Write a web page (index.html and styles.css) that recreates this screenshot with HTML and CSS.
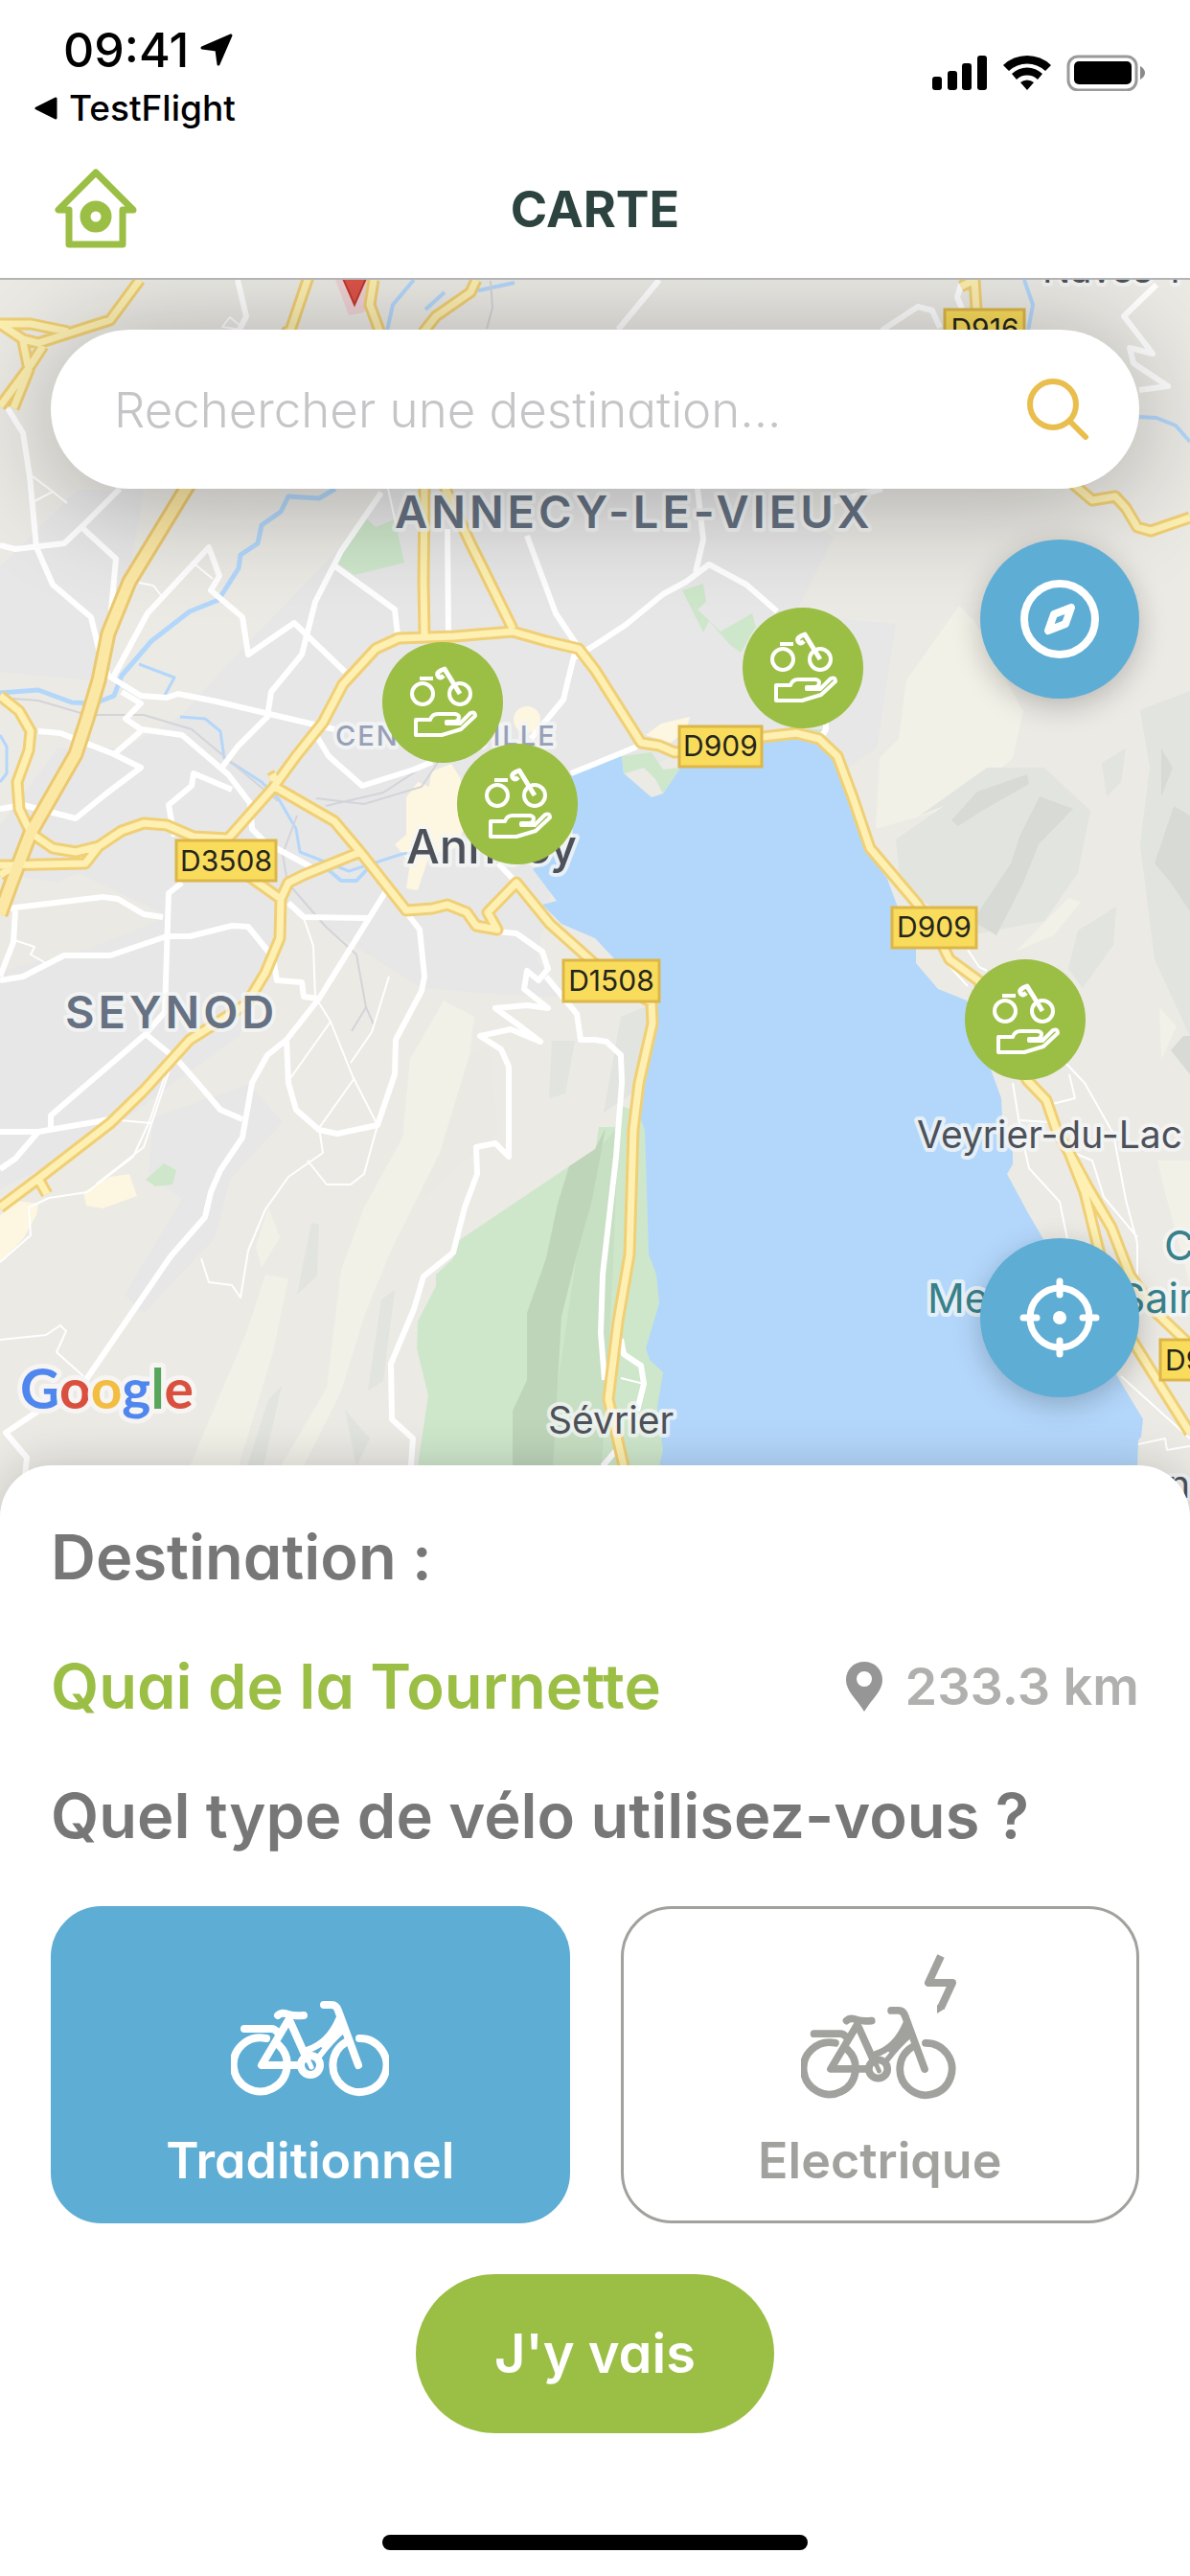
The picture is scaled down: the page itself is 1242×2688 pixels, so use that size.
FILE: index.html
```html
<!DOCTYPE html>
<html lang="fr">
<head>
  <meta charset="UTF-8" />
  <meta name="viewport" content="width=device-width, initial-scale=1.0" />
  <title>Carte</title>
  <link rel="stylesheet" href="styles.css">
</head>
<body>
  <header class="header">
    <div class="status-bar">
      <div class="status-left">
        <div class="clock">
          <span>09:41</span>
          <svg width="34" height="34" viewBox="0 0 34 34" aria-hidden="true"><path d="M32 2 L19 32 L17 17 L2 15 Z" fill="#000" stroke="#000" stroke-width="3" stroke-linejoin="round"/></svg>
        </div>
        <a class="back-app" href="#">
          <svg width="24" height="24" viewBox="0 0 24 24" aria-hidden="true"><path d="M2 12 L22 2 V22 Z" fill="#000" stroke="#000" stroke-width="3" stroke-linejoin="round"/></svg>
          TestFlight
        </a>
      </div>
      <svg class="status-icons" width="222" height="38" viewBox="0 0 222 38" aria-hidden="true">
        <rect x="0" y="23" width="10" height="14" rx="3"/>
        <rect x="16" y="17" width="10" height="20" rx="3"/>
        <rect x="31" y="9" width="10" height="28" rx="3"/>
        <rect x="47" y="1" width="10" height="36" rx="3"/>
        <path d="M74 11 A36 36 0 0 1 124 11 L118 17 A28 28 0 0 0 80 17 Z M83 20 A23 23 0 0 1 115 20 L110 26 A16 16 0 0 0 88 26 Z M92 29 A11 11 0 0 1 106 29 L99 37 Z"/>
        <rect x="142" y="2" width="71" height="35" rx="10" fill="none" stroke="#9a9a9a" stroke-width="3"/>
        <rect x="148" y="7" width="60" height="24" rx="5"/>
        <path d="M217 12 Q222 15 222 19 Q222 23 217 26 Z" fill="#8a8a8a"/>
      </svg>
    </div>
    <nav class="nav-bar">
      <a class="home-link" href="#" aria-label="Accueil">
        <svg width="86" height="84" viewBox="0 0 86 84" fill="none" stroke="#9bbe45">
          <path d="M43 4 L4 43 H15 V79 H71 V43 H82 Z" stroke-width="7" stroke-linejoin="round"/>
          <circle cx="43" cy="50" r="11" stroke-width="11"/>
        </svg>
      </a>
      <h1>CARTE</h1>
    </nav>
  </header>

  <main class="map">
    <svg class="map-canvas" viewBox="0 291 1242 1291" preserveAspectRatio="xMidYMin slice">
      <defs>
        <path id="roads" d="M146 291 L115 333 71 347 40 357 24 353 0 337 M0 337 L32 337 71 345 M45 360 L32 380 0 423 M24 355 L30 385 14 425
          M0 725 L20 741 32 762 30 782 18 815 20 843 32 868 55 884 79 888 103 882 127 866 150 858 174 860 202 872 238 874
          M0 902 L89 900 103 882 M0 912 L24 898
          M238 874 L285 821 309 788 337 753 358 713 392 676 416 665 475 663 535 658 570 668 604 676 621 698 669 774 688 777 704 784 760 778 796 768 831 764 855 770 874 788 890 831 908 884 958 943 985 988 991 1000 1021 1022 1072 1126 1092 1147 1104 1182 1116 1202 1136 1239 1160 1280 1179 1329 1207 1369 1250 1410
          M1116 1202 L1132 1243 1146 1300 1165 1370 1187 1406 1215 1451 1242 1494
          M303 344 L323 285 M390 291 L386 317 396 344 443 509 442 606 443 661 M497 291 L491 304 455 329 443 344 465 509 491 566 503 590 535 655
          M285 819 L349 856 376 888 424 949 451 947 467 943 487 951 497 965 519 969 509 951 539 920 574 963 640 1022 680 1045 681 1067 667 1129 661 1178 657 1308 645 1378 635 1459 651 1529 660 1582
          M376 888 L317 912 301 920 293 937 M248 905 L293 937 292 978 277 1014 257 1047 198 1084 150 1137 115 1171 40 1229 0 1259 M40 1229 L49 1245
          M1090 480 L1126 509 1140 521 1164 517 1175 529 1187 549 1201 553 1242 539 M1003 298 L1017 291 1019 321 M282 812 L289 808"/>
        <path id="highway" d="M303 344 L194 509 135 606 113 660 103 709 91 749 79 786 32 868 12 920 0 953"/>
        <g id="bike-pin">
          <circle r="63" fill="#9bbe45"/>
          <g fill="none" stroke="#fff" stroke-width="4" stroke-linejoin="round">
            <circle cx="-21" cy="-9" r="11"/>
            <circle cx="18" cy="-9" r="11"/>
            <path d="M-24 -25 H-10" stroke-width="4"/>
            <path d="M18 -9 L2 -35 Q-7 -32 -5 -28 T1 -28" stroke-width="5"/>
            <path d="M-28 34 V18 H-13 Q-11 12 -5 12 H13 Q17 13 17 15 Q17 20 12 20 H4 V22 H18 L29 11 Q34 9 34 14 L19 28 L-1 34 Z"/>
          </g>
        </g>
      </defs>

      <!-- relief et zones urbaines -->
      <rect y="291" width="1242" height="1291" fill="#ebeae5"/>
      <g fill="#e7e7e7">
        <path d="M0 590 L80 510 L150 510 L135 600 L100 710 L0 700 Z"/>
        <path d="M350 575 L400 509 H800 L870 560 L830 640 L935 650 L915 780 L885 800 L700 790 L596 830 L560 1000 L590 1040 L500 1035 L440 1030 L360 980 L300 940 L250 1080 L180 1130 L100 1190 L0 1240 V960 L60 990 L175 955 L60 900 L130 780 L190 745 L230 700 Z"/>
        <path d="M160 1165 L260 1130 L295 1170 L240 1230 L225 1290 L150 1370 L130 1350 L190 1250 L155 1225 Z"/>
        <path d="M60 780 L130 780 L250 900 L160 870 L60 920 L0 910 V860 Z"/>
      </g>
      <path d="M0 940 L107 935 L165 960 L90 990 L0 1012 Z M440 1130 L510 1090 L520 1180 L440 1250 Z" fill="#eae9e3"/>
      <g fill="#f1f1e8">
        <path d="M463 1043 L495 1060 L490 1100 L459 1202 L408 1304 L380 1373 L356 1451 L317 1529 H293 L341 1447 L356 1324 L380 1259 L420 1186 L428 1104 Z"/>
        <path d="M277 1329 L301 1333 L285 1410 L249 1529 H198 L226 1463 L257 1390 Z M280 1258 L292 1290 L273 1322 L267 1300 Z"/>
        <path d="M1017 647 L1045 700 L1068 741 L1057 790 L1001 839 L914 864 L918 790 L938 770 L946 709 L1001 631 Z"/>
        <path d="M1115 936 L1128 940 L1100 975 L1060 992 Z M1208 1210 H1242 V1340 L1215 1240 Z M1210 1050 L1228 1070 L1212 1105 Z"/>
      </g>
      <g fill="#e2e4df">
        <path d="M960 850 L1030 800 L1090 800 L1138 845 L1125 910 L1090 960 L1010 975 L940 920 L935 875 L985 840 Z"/>
        <path d="M1190 740 L1242 720 V1080 L1205 1000 L1190 880 L1200 800 Z M1150 795 L1175 780 L1170 815 L1155 830 Z"/>
        <path d="M1125 970 L1165 945 L1162 985 L1130 1030 L1115 1010 Z M398 1355 L412 1345 L400 1440 L384 1450 Z M325 1275 L333 1277 L331 1330 L310 1350 Z"/>
        <path d="M576 1085 H600 L590 1140 L573 1145 Z M648 1060 L684 1045 L660 1140 L630 1160 Z M280 1460 L294 1445 L275 1529 H258 Z M360 1470 L386 1500 L372 1529 Z"/>
      </g>
      <g fill="#d8dad5">
        <path d="M993 855 L1020 825 L1072 807 L1074 817 L1025 845 L1000 861 Z"/>
        <path d="M1064 872 L1085 830 L1120 843 L1084 880 L1068 920 L1040 975 L1015 960 L1055 900 Z"/>
        <path d="M1205 900 L1225 840 L1242 850 V950 L1222 920 Z M1222 1095 L1235 1080 H1242 V1120 Z M1212 780 L1224 800 L1212 830 Z"/>
      </g>
      <path d="M475 1296 L594 1216 L621 1202 L625 1175 H642 L649 1153 L680 1165 L700 1582 H428 L447 1455 L435 1406 L436 1378 L455 1341 V1329 L473 1312 Z" fill="#cee7cb"/>
      <path d="M621 1202 L645 1175 L640 1320 L628 1529 H574 L582 1443 L602 1308 Z" fill="#c7dfc3"/>
      <path d="M594 1216 L621 1198 L632 1176 L618 1251 L602 1308 L586 1373 L582 1443 L574 1582 H535 V1471 L550 1439 V1369 L570 1312 L582 1255 Z" fill="#bed5ba"/>
      <g fill="#cee7cb">
        <path d="M380 538 L392 549 L412 541 L422 586 L370 599 L351 586 Z"/>
        <path d="M712 615 L734 608 L737 627 L728 635 L752 658 L785 639 L789 653 L773 680 L762 672 L740 647 L734 659 Z"/>
        <path d="M152 1230 L171 1213 L184 1220 L180 1235 L162 1237 Z M840 760 H860 V768 H848 Z"/>
      </g>
      <g fill="#fdf6e0">
        <path d="M424 831 L436 815 L448 820 L450 804 L471 796 L480 810 L490 851 L475 884 L448 892 L436 928 L424 926 L428 900 L412 880 L424 870 Z"/>
        <circle cx="550" cy="750" r="14"/>
        <path d="M87 1243 L115 1227 L135 1224 L143 1247 L107 1260 L90 1257 Z M0 1267 L18 1252 L40 1255 L38 1267 L24 1292 L0 1316 Z M674 766 L690 754 L720 747 L716 762 L700 774 Z"/>
      </g>
      <path d="M350 291 H388 L380 325 L364 328 Z" fill="#efd3d5"/>

      <!-- lac et cours d'eau -->
      <path d="M596 808 L621 797 L649 788 L651 806 L680 831 L692 827 L710 800 L796 770 L831 766 L855 772 L870 790 L886 831 L904 886 L926 916 L936 943 L956 988 V1004 L979 1031 L1009 1043 L1033 1112 L1045 1145 L1046 1165 L1057 1202 V1214 L1051 1224 L1072 1263 L1090 1294 L1166 1435 L1193 1480 L1191 1498 L1188 1502 L1185 1582 H700 L688 1529 L692 1512 L686 1467 L692 1431 L678 1418 L674 1406 L688 1359 L685 1329 L677 1308 L674 1210 L673 1178 L668 1165 V1133 L686 1067 L684 1045 L621 978 L586 963 L566 943 L581 939 L556 906 L598 880 Z" fill="#b3d7fb"/>
      <path d="M649 788 L680 784 L692 802 L710 800 L692 827 L684 812 L672 800 L651 806 Z" fill="#cee7cb"/>
      <g fill="none" stroke="#b3d7fb" stroke-width="5" stroke-linejoin="round">
        <path d="M350 509 L333 519 L301 517 L293 533 L273 547 L269 566 L251 578 L249 592 L228 625 L198 637 L158 668 L127 704 L119 725 L99 733 L75 732 L40 719 L0 722"/>
        <path d="M188 747 L214 749 L230 762 L234 790 L273 815 L291 833 L309 864 L313 888 L364 908 L420 890 L440 888 M145 692 L182 706 L170 728 M0 766 L7 778 V806 L0 815" stroke-width="3"/>
        <path d="M432 291 L410 317 L404 344 M537 294 L500 302 L490 296 M444 322 L464 304 M1069 291 L1078 317 L1073 344 M1189 434 L1207 435 L1227 443 L1242 460 M343 907 L356 918 L372 918 L386 903" stroke-width="4"/>
      </g>

      <g fill="none" stroke="#d3d4da" stroke-width="2">
        <path d="M0 727 L40 730 L91 745 H150 L200 760 L290 835 M330 832 L380 838 L440 820 L460 790 M340 840 L400 826 L440 800 M310 850 L295 890 L300 920 L340 966 L372 995 L382 1050 L367 1075 M382 1050 L390 1068 M512 292 L514 320 L508 342"/>
      </g>

      <!-- petites rues -->
      <g fill="none" stroke="#fff" stroke-width="2" stroke-linejoin="round">
        <path d="M317 957 L327 986 L329 1039 L345 1065 L368 1122 L394 1173 L380 1224 L366 1235 H341 L321 1210 M406 1018 L388 1076 L366 1108 M345 1065 L301 1127 M370 1124 L333 1176 L337 1202 L301 1227 L277 1261 L259 1304 L251 1353 L242 1340 L218 1337 L210 1312"/>
        <path d="M174 1116 L156 1169 L139 1206 L91 1243 L51 1249 L30 1259 L32 1288 L0 1316 M0 1397 L48 1392 L63 1382 L69 1388 L59 1410 L87 1435 M178 1112 L150 1196 L100 1235 M12 979 L36 987 L32 995 L48 1004 M115 1167 L158 1171"/>
        <path d="M1057 1129 L1065 1178 L1074 1218 L1106 1253 L1114 1292 M1112 1108 L1132 1129 L1162 1182 L1175 1251 L1187 1296 V1340 M1010 990 L1022 1008 L1030 1012 M989 1005 L1010 1028 M1116 1120 L1122 1145 L1098 1151 M1065 1168 L1095 1170 M1116 1200 L1140 1210 L1152 1248 L1187 1290 M1170 1435 L1242 1500 M1188 1506 L1216 1500 L1218 1512 L1242 1508"/>
        <path d="M34 496 L55 512 L36 522 M55 512 L70 524 M200 585 L222 603 M145 607 L160 610 L168 620 M250 343 L232 340 L240 330 L252 340 M648 1437 L672 1443 M405 509 L413 545"/>
      </g>
      <g fill="none" stroke="#fff" stroke-width="6" stroke-linejoin="round">
        <path d="M248 291 L257 329 L250 343 M0 568 L16 572 L67 566 L85 549 L125 509 M85 549 L121 582 L115 647 M119 704 L154 639 L218 570 L229 600 L220 615 L253 643 L259 682 L307 649 L360 700"/>
        <path d="M8 425 L24 451 L31 496 L38 570 L55 609 L95 643 L104 680 L113 704 L147 725 L174 727 L186 723 L226 731 L349 760"/>
        <path d="M398 513 L356 574 L329 627 L315 682 L283 721 L279 747 L248 778 L230 802 M350 590 L412 635 L415 662 M467 551 L468 664 L485 660 M550 558 L580 639 L602 672 L594 704 L588 729 L554 770 M600 685 L621 672 L653 651 L692 619 L716 606 L740 588 L779 609 L811 637 M728 509 L734 562 L726 596"/>
        <path d="M127 721 L147 733 L131 749 L147 760 L190 766 L238 807 L261 837 L263 864 L277 878 L325 904 M147 762 L119 786 M40 762 L63 764 L119 786 L147 800 L111 827 L79 853 L24 839 L0 843 M182 872 L176 839 L200 819 L202 806 L242 823 M331 768 L343 788 L378 819 L432 802 L451 794 M596 806 L621 796 L665 778"/>
        <path d="M688 291 L645 343 M920 344 L958 319 L973 323 L981 341 M1207 296 L1173 329 L1203 368 L1179 362 L1183 378 L1219 402 L1189 406 M1003 296 L999 309 L1004 321 M855 772 L862 760 V745 M860 525 L921 509"/>
        <path d="M0 1022 L24 1018 L67 996 H115 L174 976 H198 L242 965 L259 966 L285 998 L289 1022 L315 1024 L317 1039 L333 1041 M190 920 L176 931 L172 1055 L152 1078 L53 1163 V1175 M0 1180 H40 L115 1167 M40 1180 L16 1208 L0 1219 M152 1078 L186 1106 L208 1131 L230 1157 L253 1167"/>
        <path d="M404 927 L333 1041 L299 1084 L279 1100 L263 1129 L253 1186 L230 1220 L220 1243 L214 1269 L178 1310 L91 1437 L6 1494 L28 1520 L24 1560 M299 1084 L301 1129 L309 1157 L333 1178 L352 1182 L394 1173 L412 1120 L413 1084 L440 1033 L443 1018 L438 969 L424 951 M301 941 L317 956 L384 957"/>
        <path d="M8 947 L107 935 L123 937 L150 953 L170 956 M16 949 L14 982 L0 1018 M519 971 L539 973 L566 992 L572 1010 L562 1022 L550 1012 L547 1031 L572 1051 L550 1048 L517 1051 L539 1067 L564 1086 L533 1073 L501 1080 L523 1094 L531 1112 V1206 L517 1192 L497 1196 L498 1224 L485 1259 L473 1306 L442 1331 L432 1365 L408 1422 L409 1480 L431 1500 L428 1540 M539 920 L520 900"/>
        <path d="M570 1018 L602 1057 L606 1084 H621 L633 1086 L648 1100 L649 1129 L643 1206 L629 1329 L627 1390 L631 1439 M648 1396 L651 1412 L669 1424 L672 1443 L665 1471 M645 1510 L629 1529"/>
      </g>

      <!-- routes principales -->
      <g fill="none" stroke-linejoin="round">
        <use href="#roads" stroke="#f0cf75" stroke-width="13"/>
        <use href="#highway" stroke="#ebc971" stroke-width="17"/>
        <use href="#roads" stroke="#fdf0b2" stroke-width="7"/>
        <use href="#highway" stroke="#fce8a5" stroke-width="11"/>
      </g>
      <path d="M356 285 L370 317 L384 285 Z" fill="#dd5449" stroke="#c0392f" stroke-width="2"/>

      <g class="place">
        <text class="town" x="412" y="550">ANNECY-LE-VIEUX</text>
        <text class="town" x="68" y="1072">SEYNOD</text>
        <text class="district" x="350" y="777">CENTRE-VILLE</text>
        <text class="city" x="424" y="900">Annecy</text>
        <text x="1088" y="294">Naves-P</text>
        <text x="572" y="1495">Sévrier</text>
        <text x="957" y="1197">Veyrier-du-Lac</text>
        <text class="sight" x="1215" y="1314">Château</text>
        <text class="sight" x="968" y="1369">Menthon-Saint</text>
        <text x="1242" y="1562" text-anchor="end">Menthon</text>
      </g>

      <g class="shield">
        <rect x="184" y="876" width="104" height="42"/><text x="236" y="908">D3508</text>
        <rect x="709" y="757" width="86" height="42"/><text x="752" y="788">D909</text>
        <rect x="931" y="946" width="88" height="42"/><text x="975" y="977">D909</text>
        <rect x="588" y="1001" width="100" height="43"/><text x="638" y="1033">D1508</text>
        <rect x="986" y="322" width="83" height="42"/><text x="1028" y="353">D916</text>
        <rect x="1211" y="1397" width="88" height="42"/><text x="1255" y="1429">D909</text>
      </g>

      <text class="google" x="21" y="1469"><tspan fill="#5087ee">G</tspan><tspan fill="#d9503f">o</tspan><tspan fill="#f3bd42">o</tspan><tspan fill="#5087ee">g</tspan><tspan fill="#58a55c">l</tspan><tspan fill="#d9503f">e</tspan></text>

      <a href="#" aria-label="Station Centre-Ville"><use href="#bike-pin" x="462" y="732"/></a>
      <a href="#" aria-label="Station Annecy"><use href="#bike-pin" x="540" y="838"/></a>
      <a href="#" aria-label="Station Albigny"><use href="#bike-pin" x="838" y="696"/></a>
      <a href="#" aria-label="Station Veyrier"><use href="#bike-pin" x="1070" y="1063"/></a>
    </svg>

    <div class="map-controls">
      <form class="search">
        <input type="search" aria-label="Rechercher une destination" placeholder="Rechercher une destination...">
        <button type="submit" aria-label="Rechercher">
          <svg width="66" height="66" viewBox="0 0 66 66" fill="none" stroke="#e9be4d" stroke-width="6" stroke-linecap="round">
            <circle cx="28" cy="28" r="24"/>
            <path d="M46 46 L62 62"/>
          </svg>
        </button>
      </form>
      <button class="round-button" type="button" aria-label="Boussole">
        <svg width="84" height="84" viewBox="0 0 84 84" fill="none" stroke="#fff" stroke-width="8" stroke-linejoin="round">
          <circle cx="42" cy="42" r="37"/>
          <path d="M54 30 L48 47 L30 54 L36 37 Z"/>
        </svg>
      </button>
      <button class="round-button locate" type="button" aria-label="Me localiser">
        <svg width="84" height="84" viewBox="0 0 84 84" fill="none" stroke="#fff" stroke-width="7" stroke-linecap="round">
          <circle cx="42" cy="42" r="31"/>
          <path d="M42 4 V18 M42 66 V80 M4 42 H18 M66 42 H80"/>
          <circle cx="42" cy="42" r="7" fill="#fff" stroke="none"/>
        </svg>
      </button>
    </div>
  </main>

  <section class="panel">
    <h2>Destination :</h2>
    <div class="destination">
      <span class="destination-name">Quai de la Tournette</span>
      <span class="distance">
        <svg width="38" height="52" viewBox="0 0 38 52" aria-hidden="true"><path fill="#969696" fill-rule="evenodd" d="M19 0 C8 0 0 8 0 19 C0 31 12 40 19 52 C26 40 38 31 38 19 C38 8 30 0 19 0 Z M19 10 A8 8 0 1 1 19 26 A8 8 0 1 1 19 10 Z"/></svg>
        233.3 km
      </span>
    </div>
    <h2 id="bike-question">Quel type de vélo utilisez-vous ?</h2>

    <div class="bike-types" role="radiogroup" aria-labelledby="bike-question">
      <label class="bike-card">
        <input type="radio" name="bike" value="traditionnel" checked>
        <svg width="165" height="155" viewBox="0 -51 165 155" fill="none" stroke="currentColor" stroke-width="8" stroke-linecap="round" stroke-linejoin="round" aria-hidden="true">
          <g id="bike">
            <path d="M37 39 A28 28 0 1 0 50 46"/>
            <path d="M120 43 A28 28 0 1 0 134 39"/>
            <path d="M14 29 H42 Q46 29 49 33"/>
            <path d="M49 15 Q53 11 60 14 Q66 16 76 15"/>
            <path d="M60 20 L32 67 H72 M62 22 L79 60"/>
            <path d="M97 4 H105 Q110 4 112 10 L133 67"/>
            <path d="M113 18 Q102 44 80 51" stroke-width="7"/>
            <path d="M118 30 Q106 40 92 58 M116 26 L96 46" stroke-width="6"/>
            <circle cx="83" cy="67" r="10"/>
            <path d="M79 58 L84 69" stroke-width="5"/>
          </g>
        </svg>
        <span>Traditionnel</span>
      </label>
      <label class="bike-card">
        <input type="radio" name="bike" value="electrique">
        <svg width="165" height="155" viewBox="0 -51 165 155" fill="none" stroke="currentColor" stroke-width="8" stroke-linecap="round" stroke-linejoin="round" aria-hidden="true">
          <use href="#bike" transform="translate(0 6) scale(.97)"/>
          <path d="M146 -47 L133 -19 H158 L146 7" stroke-linecap="butt"/>
          <path d="M142 4 L150 8 L142 13 Z" fill="currentColor" stroke="none"/>
        </svg>
        <span>Electrique</span>
      </label>
    </div>

    <button class="go-button" type="button">J'y vais</button>
    <div class="home-indicator"></div>
  </section>
</body>
</html>
```
FILE: styles.css
```css
* {
  box-sizing: border-box;
}

body {
  margin: 0;
  min-height: 100vh;
  display: flex;
  flex-direction: column;
  font-family: Inter, "Liberation Sans", sans-serif;
  font-feature-settings: "cv11";
  background: #fff;
}

button, input {
  font: inherit;
  font-feature-settings: inherit;
  border: none;
}

button {
  cursor: pointer;
}

svg {
  display: block;
}

a {
  color: inherit;
  text-decoration: none;
}

/* header */
.header {
  border-bottom: 2px solid #b4b4b4;
}

.status-bar {
  display: flex;
  justify-content: space-between;
  align-items: flex-start;
  height: 146px;
  padding: 22px 47px 0 36px;
}

.status-left {
  font-feature-settings: normal;
}

.clock {
  display: flex;
  align-items: center;
  gap: 12px;
  padding-left: 30px;
  font-size: 50px;
  font-weight: 500;
  line-height: 60px;
}

.back-app {
  display: flex;
  align-items: center;
  gap: 12px;
  font-size: 37px;
  font-weight: 500;
  line-height: 62px;
}

.status-icons {
  margin-top: 35px;
}

.nav-bar {
  display: grid;
  grid-template-columns: 86px 1fr 86px;
  align-items: center;
  height: 144px;
  padding: 0 57px;
}

.nav-bar h1 {
  margin: 0;
  text-align: center;
  font-size: 52px;
  font-weight: 700;
  color: #2d4340;
}

/* map */
.map {
  position: relative;
  flex: 1;
  display: flex;
  overflow: hidden;
  background: #ebeae5;
}

.map-canvas {
  position: absolute;
  inset: 0;
  width: 100%;
  height: 100%;
  font-feature-settings: normal;
}

.place {
  font-size: 39px;
  fill: #4d5159;
  stroke: #f4f6f6;
  stroke-width: 8px;
  stroke-linejoin: round;
  stroke-opacity: 0.8;
  paint-order: stroke;
}

.place .town {
  font-size: 47px;
  font-weight: 600;
  letter-spacing: 4px;
  fill: #667283;
}

.place .district {
  font-size: 29px;
  font-weight: 500;
  letter-spacing: 2px;
  fill: #97a0b8;
}

.place .city {
  font-size: 49px;
  font-weight: 500;
}

.place .sight {
  font-size: 43px;
  fill: #38818a;
}

.shield rect {
  fill: #fadc5c;
  stroke: #dcb648;
  stroke-width: 3px;
}

.shield text {
  font-size: 30px;
  text-anchor: middle;
  fill: #25251c;
}

.google {
  font-family: Lato, sans-serif;
  font-size: 57px;
  font-weight: 700;
  stroke: #f6f5f3;
  stroke-width: 10px;
  stroke-linejoin: round;
  paint-order: stroke;
}

.map-controls {
  position: relative;
  flex: 1;
  display: flex;
  flex-direction: column;
  align-items: flex-end;
  gap: 53px;
  padding: 52px 53px 125px;
  pointer-events: none;
}

.map-controls > * {
  pointer-events: auto;
}

.search {
  align-self: stretch;
  display: flex;
  align-items: center;
  height: 166px;
  padding: 0 52px 0 66px;
  background: #fff;
  border-radius: 83px;
  box-shadow: 0 10px 120px rgba(0, 0, 0, 0.3);
}

.search input {
  flex: 1;
  min-width: 0;
  padding: 0;
  font-size: 51px;
  font-weight: 300;
  background: none;
  outline: none;
}

.search input::placeholder {
  color: #c5c5c7;
}

.search button {
  padding: 0;
  background: none;
}

.round-button {
  display: flex;
  align-items: center;
  justify-content: center;
  width: 166px;
  height: 166px;
  padding: 0;
  border-radius: 50%;
  background: #5eadd4;
  box-shadow: 0 8px 30px rgba(0, 0, 0, 0.22);
}

.locate {
  margin-top: auto;
}

/* bottom panel */
.panel {
  position: relative;
  display: flex;
  flex-direction: column;
  gap: 53px;
  margin-top: -54px;
  padding: 55px 53px 27px;
  background: #fff;
  border-radius: 54px 54px 0 0;
  box-shadow: 0 0 50px rgba(0, 0, 0, 0.18);
}

.panel h2,
.destination {
  margin: 0;
  font-size: 65px;
  font-weight: 600;
  line-height: 82px;
  color: #777;
}

.destination {
  display: flex;
  align-items: center;
  justify-content: space-between;
}

.destination-name {
  color: #9bbe45;
}

.distance {
  display: flex;
  align-items: center;
  gap: 24px;
  font-size: 54px;
  color: #b0b0ae;
}

.bike-types {
  display: grid;
  grid-template-columns: 1fr 1fr;
  gap: 53px;
}

.bike-card {
  display: flex;
  flex-direction: column;
  align-items: center;
  gap: 32px;
  padding: 45px 45px 31px;
  border: 3px solid #a1a29d;
  border-radius: 53px;
  color: #a1a29d;
  font-size: 52px;
  font-weight: 600;
  line-height: 62px;
  cursor: pointer;
}

.bike-card:has(input:checked) {
  background: #5eadd4;
  border-color: #5eadd4;
  color: #fff;
}

.bike-card input {
  position: absolute;
  opacity: 0;
}

.go-button {
  align-self: center;
  height: 166px;
  padding: 0 82px;
  border-radius: 83px;
  background: #9bbe45;
  color: #fff;
  font-size: 56px;
  font-weight: 600;
}

.home-indicator {
  align-self: center;
  width: 444px;
  max-width: 60%;
  height: 16px;
  margin-top: 53px;
  border-radius: 8px;
  background: #000;
}
```
